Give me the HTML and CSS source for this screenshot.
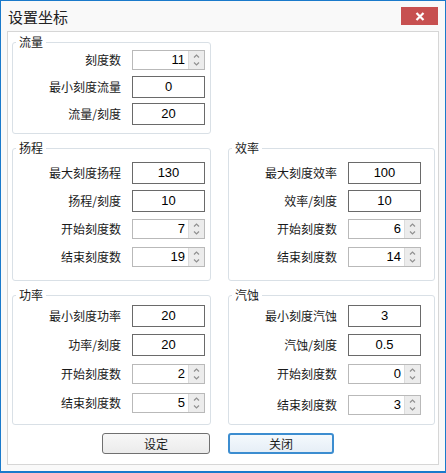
FILE: index.html
```html
<!DOCTYPE html>
<html lang="zh-CN">
<head>
    <meta charset="UTF-8">
    <title>设置坐标</title>
    <link rel="stylesheet" href="styles.css">
</head>
<body>

    <div class="window">
        <div class="titlebar">
            <span class="title">设置坐标</span>
            <button class="close-btn">
                <svg width="10" height="9" viewBox="0 0 10 9"><path d="M1.5 1 L8.5 8 M8.5 1 L1.5 8" stroke="#fff" stroke-width="2.2"/></svg>
            </button>
        </div>

        <div class="panel">
            <div class="groups">
                <!-- 流量 -->
                <fieldset class="group group-left group-flow">
                    <legend>流量</legend>
                    <div class="row">
                        <span class="label">刻度数</span>
                        <div class="spin"><span class="spin-value">11</span><span class="spin-btns"></span></div>
                    </div>
                    <div class="row">
                        <span class="label">最小刻度流量</span>
                        <div class="num">0</div>
                    </div>
                    <div class="row">
                        <span class="label">流量/刻度</span>
                        <div class="num">20</div>
                    </div>
                </fieldset>
                <div></div>

                <!-- 扬程 -->
                <fieldset class="group group-left group-mid">
                    <legend>扬程</legend>
                    <div class="row"><span class="label">最大刻度扬程</span><div class="num">130</div></div>
                    <div class="row"><span class="label">扬程/刻度</span><div class="num">10</div></div>
                    <div class="row"><span class="label">开始刻度数</span><div class="spin"><span class="spin-value">7</span><span class="spin-btns"></span></div></div>
                    <div class="row"><span class="label">结束刻度数</span><div class="spin"><span class="spin-value">19</span><span class="spin-btns"></span></div></div>
                </fieldset>

                <!-- 效率 -->
                <fieldset class="group group-right group-mid">
                    <legend>效率</legend>
                    <div class="row"><span class="label">最大刻度效率</span><div class="num">100</div></div>
                    <div class="row"><span class="label">效率/刻度</span><div class="num">10</div></div>
                    <div class="row"><span class="label">开始刻度数</span><div class="spin"><span class="spin-value">6</span><span class="spin-btns"></span></div></div>
                    <div class="row"><span class="label">结束刻度数</span><div class="spin"><span class="spin-value">14</span><span class="spin-btns"></span></div></div>
                </fieldset>

                <!-- 功率 -->
                <fieldset class="group group-left group-low">
                    <legend>功率</legend>
                    <div class="row"><span class="label">最小刻度功率</span><div class="num">20</div></div>
                    <div class="row"><span class="label">功率/刻度</span><div class="num">20</div></div>
                    <div class="row"><span class="label">开始刻度数</span><div class="spin"><span class="spin-value">2</span><span class="spin-btns"></span></div></div>
                    <div class="row"><span class="label">结束刻度数</span><div class="spin"><span class="spin-value">5</span><span class="spin-btns"></span></div></div>
                </fieldset>

                <!-- 汽蚀 -->
                <fieldset class="group group-right group-low">
                    <legend>汽蚀</legend>
                    <div class="row"><span class="label">最小刻度汽蚀</span><div class="num">3</div></div>
                    <div class="row"><span class="label">汽蚀/刻度</span><div class="num">0.5</div></div>
                    <div class="row"><span class="label">开始刻度数</span><div class="spin"><span class="spin-value">0</span><span class="spin-btns"></span></div></div>
                    <div class="row row-last"><span class="label">结束刻度数</span><div class="spin"><span class="spin-value">3</span><span class="spin-btns"></span></div></div>
                </fieldset>
            </div>

            <div class="buttons">
                <button class="btn btn-set">设定</button>
                <button class="btn btn-close">关闭</button>
            </div>
        </div>
    </div>

</body>
</html>
```

FILE: styles.css
```css
body {
    margin: 0;
    font-family: "Noto Sans CJK SC", sans-serif;
    font-size: 12px;
    color: #1a1a1a;
    background: #fff;
}
.window {
    width: 446px;
    height: 473px;
    box-sizing: border-box;
    border: 1px solid #1a7acb;
    border-bottom-width: 2px;
    background: #f9f9f9;
}
.titlebar {
    height: 30px;
    display: flex;
    justify-content: space-between;
    align-items: flex-start;
}
.title {
    margin-left: 7px;
    margin-top: 6px;
    font-size: 15px;
    line-height: 20px;
    color: #222;
}
.close-btn {
    margin: 6px 7px 0 0;
    width: 37px;
    height: 18px;
    border: none;
    padding: 0;
    background: #c75050;
    display: flex;
    align-items: center;
    justify-content: center;
}
.panel {
    margin: 0 6px;
    border: 1px solid #d6d6d6;
    background: #fff;
    padding: 3px 3px 10px 4px;
}
.groups {
    display: grid;
    grid-template-columns: 199px 207px;
    column-gap: 17px;
    row-gap: 7px;
}
.group {
    margin: 0;
    min-width: 0;
    border: 1px solid #d9e0e6;
    border-radius: 3px;
    display: flex;
    flex-direction: column;
}
.group legend {
    margin-left: 3px;
    padding: 0 3px;
    line-height: 14px;
    font-size: 12px;
}
.group-left {
    padding-right: 5px;
    padding-left: 0;
}
.group-right {
    padding-right: 13px;
    padding-left: 0;
}
.group-flow {
    padding-top: 0;
    padding-bottom: 8px;
    gap: 5px;
}
.group-mid {
    padding-top: 7px;
    padding-bottom: 12px;
    gap: 6px;
}
.group-low {
    padding-top: 3px;
    padding-bottom: 10px;
    gap: 7px;
}
.row {
    height: 22px;
    display: flex;
    justify-content: flex-end;
    align-items: center;
    gap: 11px;
}
.row-last {
    margin-top: 2px;
    margin-bottom: -2px;
}
.label {
    line-height: 16px;
}
.num {
    width: 73px;
    height: 22px;
    box-sizing: border-box;
    border: 1px solid #6a6a6a;
    text-align: center;
    font-family: "Liberation Sans", sans-serif;
    font-size: 13px;
    line-height: 20px;
    color: #000;
}
.spin {
    width: 73px;
    height: 20px;
    box-sizing: border-box;
    border: 1px solid #b9b9b9;
    display: flex;
    font-family: "Liberation Sans", sans-serif;
    font-size: 13px;
    line-height: 18px;
    color: #000;
}
.spin-value {
    flex: 1;
    text-align: right;
    padding-right: 3px;
}
.spin-btns {
    width: 15px;
    border-left: 1px solid #dcdcdc;
    background: #ececec url("data:image/svg+xml,%3Csvg xmlns='http://www.w3.org/2000/svg' width='15' height='18'%3E%3Cpath d='M5 6.5 L7.5 4 L10 6.5 M5 11.5 L7.5 14 L10 11.5' fill='none' stroke='%23909090' stroke-width='1.2'/%3E%3C/svg%3E") no-repeat center;
}
.buttons {
    display: flex;
    gap: 18px;
    padding-left: 90px;
    margin-top: 8px;
}
.btn {
    height: 21px;
    padding: 0;
    font-family: "Noto Sans CJK SC", sans-serif;
    font-size: 12px;
    color: #1a1a1a;
    border-radius: 3px;
    background: linear-gradient(to bottom, #f7f7f7, #ebebeb);
}
.btn-set {
    width: 108px;
    border: 1px solid #707070;
}
.btn-close {
    width: 106px;
    border: 2px solid #3c8dd0;
    background: linear-gradient(to bottom, #f4f9fd, #e6eef6);
}
```
